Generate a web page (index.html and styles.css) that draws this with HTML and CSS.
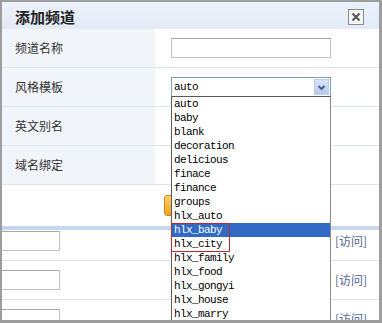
FILE: index.html
```html
<!DOCTYPE html>
<html lang="zh">
<head>
<meta charset="utf-8">
<title>添加频道</title>
<link rel="stylesheet" href="styles.css">
</head>
<body>
<div class="dialog">
  <div class="titlebar">
    <span class="title">添加频道</span>
    <span class="close"><svg width="16" height="16" viewBox="0 0 16 16"><rect x="0.5" y="0.5" width="15" height="15" fill="#f5f5f5" stroke="#8c8c8c"/><path d="M4.5 4.5 L11.5 11.5 M11.5 4.5 L4.5 11.5" stroke="#555" stroke-width="2"/></svg></span>
  </div>
  <div class="form">
    <div class="row"><div class="label">频道名称</div><div class="value"><span class="input wide"></span></div></div>
    <div class="row"><div class="label">风格模板</div><div class="value"><div class="select"><span class="sel-text">auto</span><span class="arrow"><svg width="13" height="15" viewBox="0 0 13 15"><path d="M3.5 6 L6.5 9 L9.5 6" fill="none" stroke="#4d6185" stroke-width="2"/></svg></span></div></div></div>
    <div class="row"><div class="label">英文别名</div><div class="value"></div></div>
    <div class="row"><div class="label">域名绑定</div><div class="value"></div></div>
  </div>
  <div class="actions"><span class="btn"></span></div>
  <div class="band"></div>
  <div class="list">
    <div class="lrow first"><span class="input small"></span><span class="visit">[访问]</span></div>
    <div class="lrow"><span class="input small"></span><span class="visit">[访问]</span></div>
    <div class="lrow"><span class="input small"></span><span class="visit">[访问]</span></div>
  </div>
  <ul class="dropdown">
    <li>auto</li>
    <li>baby</li>
    <li>blank</li>
    <li>decoration</li>
    <li>delicious</li>
    <li>finace</li>
    <li>finance</li>
    <li>groups</li>
    <li>hlx_auto</li>
    <li class="active">hlx_baby</li>
    <li>hlx_city</li>
    <li>hlx_family</li>
    <li>hlx_food</li>
    <li>hlx_gongyi</li>
    <li>hlx_house</li>
    <li>hlx_marry</li>
  </ul>
  <div class="mark"></div>
</div>
</body>
</html>
```

FILE: styles.css
```css
* { box-sizing: border-box; }
html, body { margin: 0; padding: 0; background: #fff; }
body { font-family: "Noto Sans CJK SC", "Liberation Sans", sans-serif; font-size: 12px; color: #333; }

.dialog {
  position: relative;
  width: 382px;
  height: 323px;
  border: 2px solid #9d9d9d;
  border-right-width: 3px;
  border-bottom-width: 3px;
  overflow: hidden;
  background: #fff;
}

.titlebar {
  height: 27px;
  display: flex;
  align-items: center;
  justify-content: space-between;
  padding: 0 15px 0 13px;
  background: linear-gradient(#ebf2fa, #e1eaf5);
}
.title { font-size: 15px; font-weight: bold; color: #222; line-height: 1; margin-top: 2px; }
.close { display: flex; margin-top: 2px; }

.row {
  display: flex;
  height: 39px;
  border-bottom: 1px solid #dfe6ee;
}
.label {
  width: 153px;
  background: #f1f5fa;
  padding-left: 13px;
  display: flex;
  align-items: center;
  line-height: 1;
}
.value {
  flex: 1;
  display: flex;
  align-items: center;
  padding-left: 16px;
}

.input {
  display: block;
  height: 20px;
  background: #fff;
  border: 1px solid #c4c4c4;
  border-top-color: #a9a9a9;
}
.input.wide { width: 160px; }
.input.small { width: 58px; border-left: none; }

.select {
  width: 160px;
  height: 20px;
  border: 1px solid #7f9db9;
  display: flex;
  align-items: center;
  justify-content: space-between;
  padding: 0 1px 0 2px;
  font-family: "Liberation Mono", monospace;
  font-size: 11px;
  letter-spacing: -0.6px;
  color: #000;
}
.arrow {
  width: 15px;
  height: 16px;
  display: flex;
  align-items: center;
  justify-content: center;
  background: linear-gradient(#d9e3fb, #b7caf3);
  border: 1px solid #bccbee;
}

.actions {
  height: 41px;
  display: flex;
  align-items: center;
  padding-left: 162px;
}
.btn {
  display: block;
  width: 60px;
  height: 21px;
  border: 1px solid #d5881b;
  border-radius: 3px;
  background: linear-gradient(#fbd16a, #eea21c);
}

.band { height: 4px; background: #c5d7ec; }

.lrow {
  height: 39px;
  display: flex;
  align-items: flex-end;
  justify-content: space-between;
  padding: 0 12px 9px 0;
  border-bottom: 1px solid #e3e3e3;
}
.lrow.first { height: 31px; }
.visit { color: #50678f; line-height: 20px; }

.dropdown {
  position: absolute;
  left: 169px;
  top: 94px;
  width: 160px;
  margin: 0;
  padding: 0;
  list-style: none;
  background: #fff;
  border: 1px solid #5a5a5a;
  border-right-color: #8a8a8a;
  font-family: "Liberation Mono", monospace;
  font-size: 11px;
  letter-spacing: -0.6px;
  color: #000;
}
.dropdown li {
  height: 14px;
  line-height: 14px;
  padding-left: 2px;
}
.dropdown li.active { background: #316ac5; color: #fff; }

.mark {
  position: absolute;
  left: 169px;
  top: 221px;
  width: 59px;
  height: 29px;
  border: 1px solid #b52a35;
}
```
